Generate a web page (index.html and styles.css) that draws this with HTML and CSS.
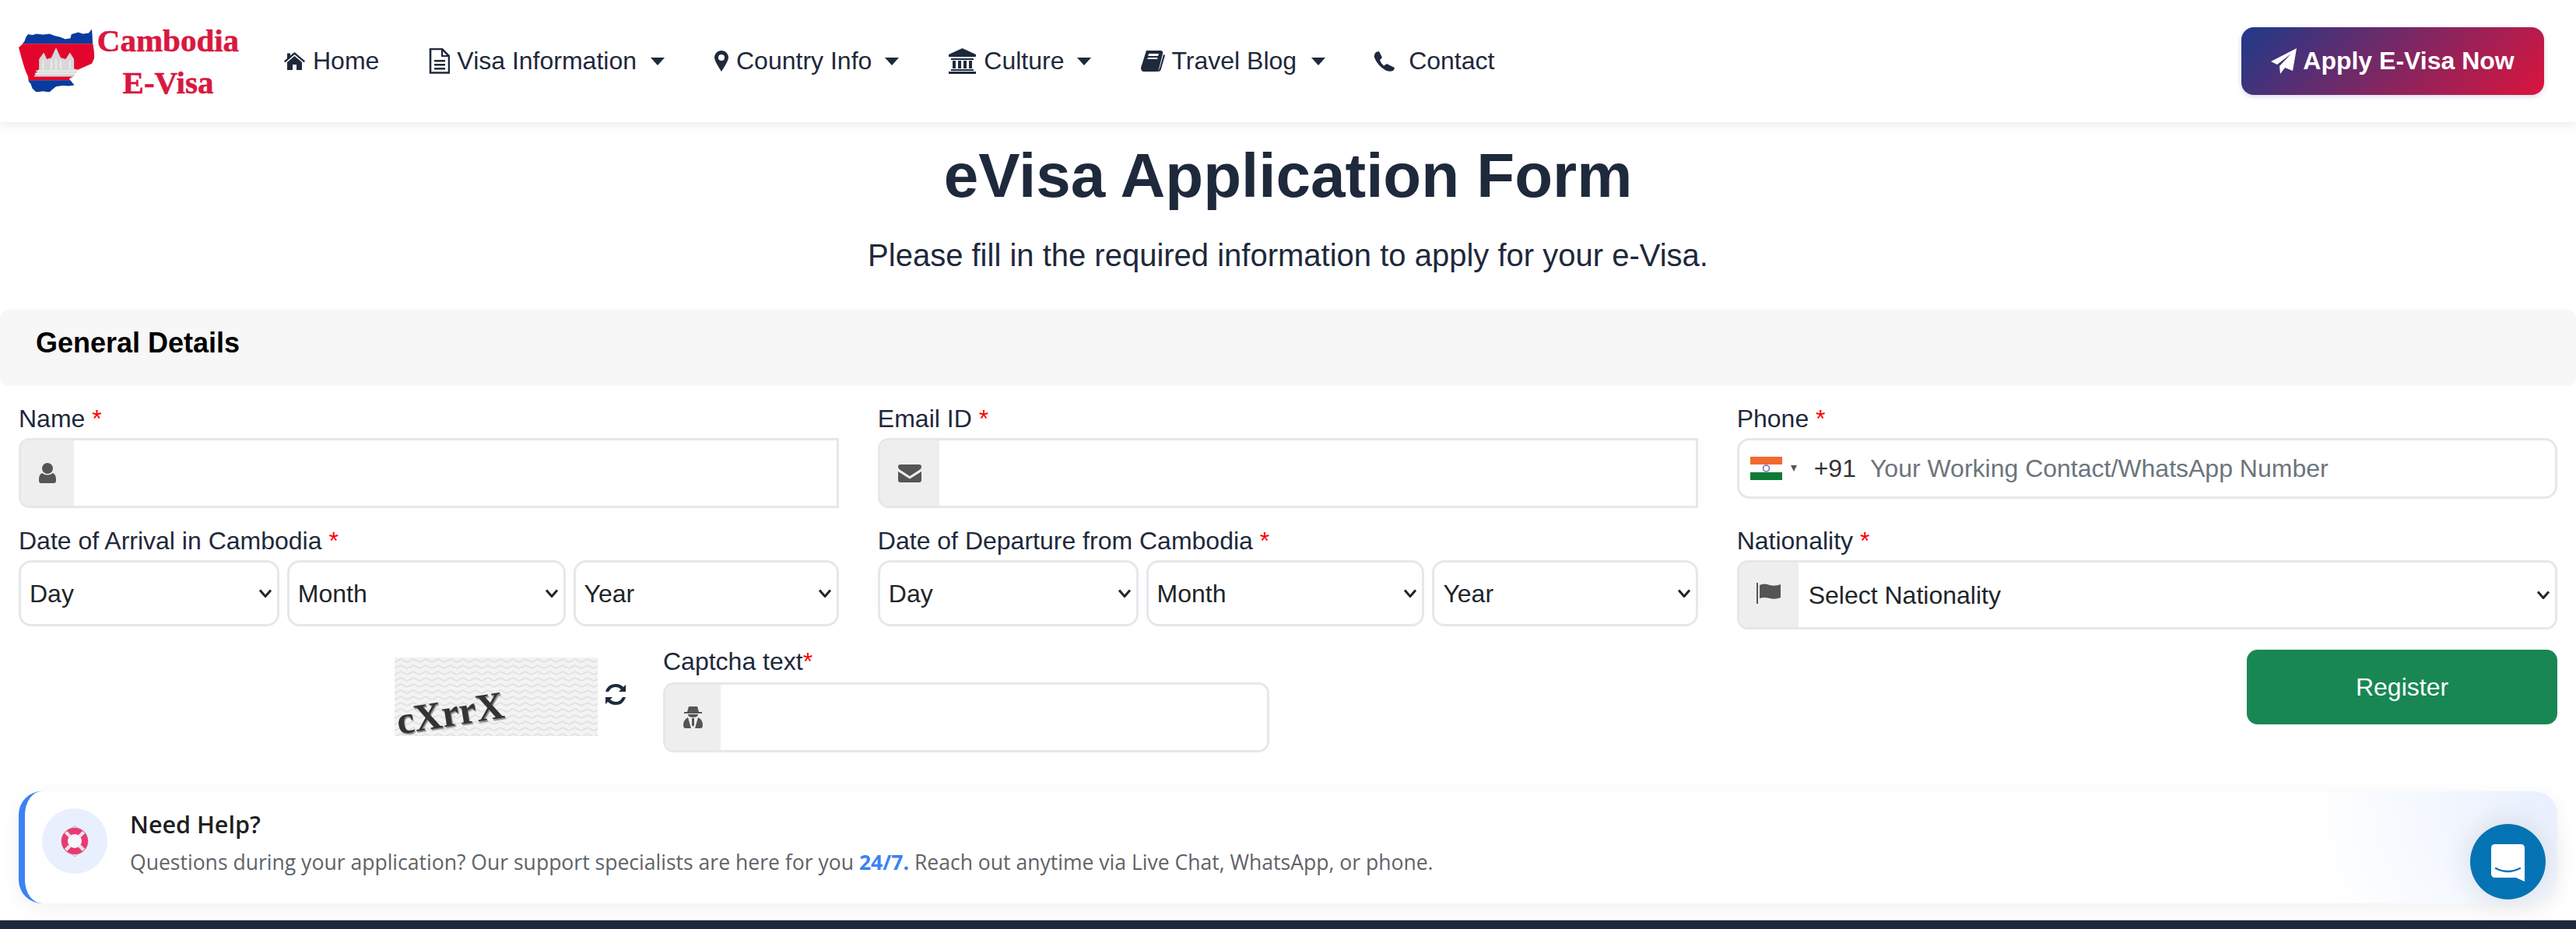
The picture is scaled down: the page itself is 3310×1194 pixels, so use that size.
FILE: index.html
```html
<!DOCTYPE html>
<html lang="en">

<head>
    <meta charset="UTF-8">
    <meta name="viewport" content="width=device-width, initial-scale=1.0">
    <title>eVisa Application Form</title>
    <link rel="stylesheet" href="styles.css">
</head>

<body>
    <header class="site-header">
        <a class="logo" href="#">
            <svg class="logo-map" viewBox="72 80 292 245">
                <defs>
                    <clipPath id="mapShape">
                        <path d="M72 150 84 140 95 125 100 110 108 100 125 103 140 98 165 101 190 98 210 106 230 110 250 118 270 115 274 100 285 97 300 92 318 98 340 95 352 80 354 105 355 130 360 160 362 190 352 212 330 222 300 235 288 250 280 262 265 270 275 282 285 295 265 298 240 296 215 300 200 312 190 322 165 318 140 322 125 308 118 290 110 280 108 262 98 240 90 215 80 180Z" />
                    </clipPath>
                </defs>
                <g clip-path="url(#mapShape)">
                    <rect x="72" y="80" width="292" height="56" fill="#0b3a9e" />
                    <rect x="72" y="136" width="292" height="140" fill="#e2062c" />
                    <rect x="72" y="276" width="292" height="50" fill="#0b3a9e" />
                </g>
                <path d="M130 262 150 232V195L168 170 180 195 197 190 215 150 233 190 252 195 268 170 284 195V232L300 235 282 262Z" fill="#d8d8d8" />
                <path d="M138 240H295M134 250H290M165 200V235M197 200V235M215 195V235M233 200V235M268 200V235" stroke="#f4f4f4" stroke-width="4" fill="none" />
            </svg>
            <span class="logo-text">Cambodia<br>E-Visa</span>
        </a>

        <nav class="main-nav">
            <a class="nav-link" href="#">
                <svg class="nav-icon icon-home" viewBox="0 0 27 23"><path d="M13.500 0 27 11.500 25.500 13.200 13.500 3 1.500 13.200 0 11.500 4 8V1.500H8V4.500ZM13.500 5 23 13V23H16V16H11V23H4V13Z" /></svg>
                Home
            </a>
            <a class="nav-link" href="#">
                <svg class="nav-icon icon-file" viewBox="0 0 27 33"><path d="M2 1H17L26 10V31.500H2Z" fill="none" stroke="currentColor" stroke-width="2.600" /><path d="M17 1V10H26" fill="none" stroke="currentColor" stroke-width="2.200" /><path d="M7 15H21V17.500H7ZM7 20H21V22.500H7ZM7 25H21V27.500H7Z" /></svg>
                Visa Information <span class="caret caret-file"></span>
            </a>
            <a class="nav-link" href="#">
                <svg class="nav-icon icon-pin" viewBox="0 0 18 27"><path fill-rule="evenodd" d="M9 0C14 0 18 4 18 9 18 13 12 22 9 27 6 22 0 13 0 9 0 4 4 0 9 0ZM9 5A4 4 0 1 0 9 13 4 4 0 1 0 9 5Z" /></svg>
                Country Info <span class="caret"></span>
            </a>
            <a class="nav-link" href="#">
                <svg class="nav-icon icon-bank" viewBox="0 0 35 33"><path d="M17.500 0 35 8V11H0V8ZM3 13H32V15H3ZM5 16H9V26H5ZM12 16H16V26H12ZM19 16H23V26H19ZM26 16H30V26H26ZM3 27H32V29H3ZM0 30H35V33H0Z" /></svg>
                Culture <span class="caret"></span>
            </a>
            <a class="nav-link" href="#">
                <svg class="nav-icon icon-book" viewBox="0 0 31 27"><path fill-rule="evenodd" d="M7 0H26Q29 1 28 4L23 24Q22 27 19 27H4Q0 27 0 22ZM10 4 9.300 7H22L23 4ZM9 9 8.300 11H21L21.500 9ZM31 6 25.500 25Q24.500 27 22 27L20 27Q23 26 24 23L29 5Z" /></svg>
                Travel Blog <span class="caret caret-book"></span>
            </a>
            <a class="nav-link" href="#">
                <svg class="nav-icon icon-phone" viewBox="0 0 28 26"><path d="M3 1 7 0 11 8 8 11Q9 15 13 18.500L17 16 27 21 26 24Q23 27 17 25 6 20 1 8 0 4 3 1Z" /></svg>
                Contact
            </a>
        </nav>

        <a class="apply-btn" href="#">
            <svg class="apply-icon" viewBox="0 0 33 33"><path d="M33 0 28 29 18 25 12 33 11 23 26 7 8 21 0 17Z" /></svg>
            Apply E-Visa Now
        </a>
    </header>

    <main>
        <h1 class="page-title">eVisa Application Form</h1>
        <p class="page-sub">Please fill in the required information to apply for your e-Visa.</p>

        <div class="section-bar">General Details</div>

        <form class="visa-form">
            <div class="form-grid">
                <div class="field">
                    <label>Name <span class="req">*</span></label>
                    <div class="input-group square-end">
                        <span class="addon addon-name">
                            <svg class="addon-icon icon-user" viewBox="0 0 22 26"><path d="M11 0A6.500 6.500 0 0 1 11 14 6.500 6.500 0 0 1 11 0ZM4 13Q11 18 18 13 22 15 22 21V23Q22 26 19 26H3Q0 26 0 23V21Q0 15 4 13Z" /></svg>
                        </span>
                        <input type="text">
                    </div>
                </div>

                <div class="field">
                    <label>Email ID <span class="req">*</span></label>
                    <div class="input-group square-end">
                        <span class="addon addon-wide">
                            <svg class="addon-icon icon-mail" viewBox="0 0 30 23"><path d="M3 0H27Q30 0 30 3 30 5 28 6.500L15 15 2 6.500Q0 5 0 3 0 0 3 0ZM0 9 15 18.500 30 9V20Q30 23 27 23H3Q0 23 0 20Z" /></svg>
                        </span>
                        <input type="text">
                    </div>
                </div>

                <div class="field">
                    <label>Phone <span class="req">*</span></label>
                    <div class="phone-box">
                        <svg class="flag-in" viewBox="0 0 41 30">
                            <rect width="41" height="10" fill="#f26a2e" />
                            <rect y="10" width="41" height="10" fill="#fff" />
                            <rect y="20" width="41" height="10" fill="#0f7a36" />
                            <circle cx="20.500" cy="15" r="4" fill="none" stroke="#5b6aa8" stroke-width="1.500" />
                        </svg>
                        <span class="flag-arrow"></span>
                        <span class="dial-code">+91</span>
                        <input type="text" placeholder="Your Working Contact/WhatsApp Number">
                    </div>
                </div>

                <div class="field">
                    <label>Date of Arrival in Cambodia <span class="req">*</span></label>
                    <div class="date-selects">
                        <select><option>Day</option></select>
                        <select><option>Month</option></select>
                        <select><option>Year</option></select>
                    </div>
                </div>

                <div class="field">
                    <label>Date of Departure from Cambodia <span class="req">*</span></label>
                    <div class="date-selects">
                        <select><option>Day</option></select>
                        <select><option>Month</option></select>
                        <select><option>Year</option></select>
                    </div>
                </div>

                <div class="field">
                    <label>Nationality <span class="req">*</span></label>
                    <div class="input-group tall">
                        <span class="addon addon-wide">
                            <svg class="addon-icon icon-flag" viewBox="0 0 31 27"><path d="M0 0H2V27H0ZM4 3Q10 0 17 3 24 5 31 2V19Q24 22 17 20 10 18 4 20Z" /></svg>
                        </span>
                        <select><option>Select Nationality</option></select>
                    </div>
                </div>
            </div>

            <div class="captcha-row">
                <div class="captcha-img"><span class="captcha-word">cXrrX</span></div>
                <svg class="refresh-icon" viewBox="0 0 28 27"><path d="M14 0Q20 0 24 4L27 1V10H18L21 7Q18 4 14 4 8 4 5 10H1Q4 0 14 0ZM1 17H10L7 20Q10 23 14 23 20 23 23 17H27Q24 27 14 27 8 27 4 23L1 26Z" /></svg>
                <div class="field captcha-field">
                    <label>Captcha text<span class="req">*</span></label>
                    <div class="input-group">
                        <span class="addon addon-spy">
                            <svg class="addon-icon icon-spy" viewBox="0 0 25 28"><path d="M7 0H18L20 7H24V9H1V7H5ZM6 10H19Q19 14 12.500 14 6 14 6 10ZM6 14 10 28H3Q0 28 0 24 0 17 6 14ZM19 14Q25 17 25 24 25 28 22 28H15ZM11 15H14L14 24 12.500 26 11 24Z" /></svg>
                        </span>
                        <input type="text">
                    </div>
                </div>
                <button class="register-btn" type="button">Register</button>
            </div>
        </form>

        <section class="help-card">
            <div class="help-circle">
                <svg class="help-buoy" viewBox="0 0 36 40">
                    <path d="M18 0 11 6M18 0 25 6M18 40 11 34M18 40 25 34" stroke="#b9afc0" stroke-width="1" />
                    <circle cx="18" cy="20" r="17" fill="none" stroke="#b3a9bb" stroke-width="1" />
                    <circle cx="18" cy="20" r="13" fill="#f6f8fe" stroke="#ea3a70" stroke-width="8" />
                    <path d="M6.500 8.500 12 14M29.500 8.500 24 14M6.500 31.500 12 26M29.500 31.500 24 26" stroke="#efe3e9" stroke-width="4.500" />
                </svg>
            </div>
            <div class="help-body">
                <h3>Need Help?</h3>
                <p>Questions during your application? Our support specialists are here for you <strong>24/7.</strong> Reach out anytime via Live Chat, WhatsApp, or phone.</p>
            </div>
        </section>
    </main>

    <footer class="site-footer"></footer>

    <button class="chat-bubble" type="button">
        <svg viewBox="0 0 43 48"><path d="M5 0H38Q43 0 43 5V48L32 43H5Q0 43 0 38V5Q0 0 5 0Z" fill="#fff" /><path d="M6 31Q21 39 37 31" fill="none" stroke="#0473b4" stroke-width="2.500" stroke-linecap="round" /></svg>
    </button>
</body>

</html>
```

FILE: styles.css
```css
* {
    box-sizing: border-box;
}

html,
body {
    height: 100%;
}

body {
    margin: 0;
    background: #fff;
    color: #1e293b;
    font-family: "Liberation Sans", Arial, sans-serif;
    font-size: 32px;
    overflow: hidden;
}

a {
    color: inherit;
    text-decoration: none;
}

/* header */
.site-header {
    display: flex;
    align-items: center;
    height: 157px;
    padding: 0 41px 0 24px;
    background: #fff;
    box-shadow: 0 4px 12px rgba(0, 0, 0, 0.08);
    position: relative;
}

.logo {
    display: flex;
    align-items: center;
    width: 341px;
}

.logo-map {
    width: 98px;
    height: 85px;
    margin-top: -1px;
}

.logo-text {
    width: 186px;
    margin-left: 1px;
    color: #d9183f;
    font-family: "Liberation Serif", serif;
    font-size: 41px;
    font-weight: bold;
    line-height: 54px;
    text-align: center;
    -webkit-text-stroke: 0.6px #d9183f;
}

.main-nav {
    display: flex;
    align-items: center;
    gap: 64px;
}

.nav-link {
    display: flex;
    align-items: center;
    gap: 10px;
    white-space: nowrap;
}

.nav-icon {
    fill: currentColor;
    color: #1e293b;
}

.icon-home { width: 27px; height: 23px; }
.icon-file { width: 27px; height: 33px; margin-right: -1px; }
.icon-pin { width: 18px; height: 27px; }
.icon-bank { width: 35px; height: 33px; }
.icon-book { width: 31px; height: 27px; margin-right: -2px; }
.icon-phone { width: 28px; height: 26px; margin: 0 7px 0 -2px; }

.caret {
    width: 0;
    height: 0;
    margin-left: 7px;
    border-top: 10px solid #1e293b;
    border-left: 9.500px solid transparent;
    border-right: 9.500px solid transparent;
}

.caret-file {
    margin-left: 8px;
}

.caret-book {
    margin-left: 9px;
}

.apply-btn {
    display: flex;
    align-items: center;
    justify-content: center;
    gap: 8px;
    width: 389px;
    height: 87px;
    margin-left: auto;
    border-radius: 16px;
    background: linear-gradient(135deg, #1e3a8a, #dc143c);
    color: #fff;
    font-weight: bold;
    box-shadow: 0 2px 6px rgba(30, 58, 138, 0.2);
}

.apply-icon {
    width: 33px;
    height: 33px;
    fill: #fff;
}

/* heading */
.page-title {
    margin: 21px 0 0;
    font-size: 80px;
    line-height: 96px;
    text-align: center;
}

.page-sub {
    margin: 30px 0 0;
    font-size: 40px;
    line-height: 48px;
    text-align: center;
}

.section-bar {
    height: 98px;
    margin-top: 46px;
    padding: 21px 46px 0;
    border-radius: 12px;
    background: #f7f7f7;
    color: #000;
    font-size: 36px;
    font-weight: bold;
    line-height: 43px;
}

/* form */
.visa-form {
    padding: 23px 24px 0;
}

.form-grid {
    display: grid;
    grid-template-columns: repeat(3, 1fr);
    gap: 23px 49.500px;
    align-items: start;
}

.field label {
    display: block;
    margin-bottom: 6px;
    line-height: 38px;
}

.req {
    color: #f00;
}

.input-group {
    display: flex;
    height: 90px;
    border: 3px solid #e5e7eb;
    border-radius: 14px;
    overflow: hidden;
}

.input-group.square-end {
    border-radius: 14px 0 0 14px;
}

.input-group.tall {
    height: 89px;
}

.input-group input,
.input-group select {
    flex: 1;
    min-width: 0;
    border: 0;
    outline: 0;
    background-color: #fff;
    color: #212529;
    font: inherit;
    padding: 0 8px 0 13px;
}

select {
    appearance: none;
    background-image: url("data:image/svg+xml,%3Csvg xmlns='http://www.w3.org/2000/svg' viewBox='0 0 16 11'%3E%3Cpath d='M1 1.500 8 9.500 15 1.500' fill='none' stroke='%23212529' stroke-width='3'/%3E%3C/svg%3E");
    background-repeat: no-repeat;
    background-position: right 7px center;
    background-size: 16px 11px;
}

.addon {
    display: flex;
    align-items: center;
    justify-content: center;
    flex-shrink: 0;
    width: 68px;
    background: #eee;
}

.addon-wide {
    width: 76px;
}

.addon-spy {
    width: 71px;
}

.addon-icon {
    fill: #555;
}

.icon-user { width: 22px; height: 26px; }
.icon-mail { width: 30px; height: 23px; }
.icon-flag { width: 31px; height: 27px; margin-top: -4px; }
.icon-spy { width: 25px; height: 28px; }

.date-selects {
    display: grid;
    grid-template-columns: 335fr 358fr 342fr;
    gap: 10px;
}

.date-selects select {
    width: 100%;
    height: 85px;
    padding: 0 24px 0 11px;
    border: 3px solid #e5e7eb;
    border-radius: 16px;
    background-color: #fff;
    color: #212529;
    font: inherit;
}

.phone-box {
    display: flex;
    align-items: center;
    height: 78px;
    padding-left: 14px;
    border: 3px solid #e5e7eb;
    border-radius: 16px;
}

.flag-in {
    width: 41px;
    height: 30px;
}

.flag-arrow {
    width: 0;
    height: 0;
    margin-left: 11px;
    border-top: 8px solid #555;
    border-left: 4px solid transparent;
    border-right: 4px solid transparent;
}

.dial-code {
    margin-left: 22px;
    color: #333;
}

.phone-box input {
    flex: 1;
    min-width: 0;
    margin-left: 18px;
    padding: 0;
    border: 0;
    outline: 0;
    font: inherit;
}

.phone-box input::placeholder {
    color: #6c757d;
    opacity: 1;
}

.captcha-row {
    display: flex;
    align-items: flex-start;
    margin-top: 22px;
}

.captcha-img {
    display: flex;
    align-items: flex-end;
    width: 261px;
    height: 101px;
    margin: 14px 0 0 483px;
    padding: 0 0 7px 2px;
    background-color: #f3f3f3;
    background-image: url("data:image/svg+xml,%3Csvg xmlns='http://www.w3.org/2000/svg' width='16' height='8'%3E%3Cpath d='M0 6 8 2 16 6' fill='none' stroke='%23e2e2e2' stroke-width='2'/%3E%3C/svg%3E");
}

.captcha-word {
    color: #333;
    font-family: "Liberation Serif", serif;
    font-size: 50px;
    font-weight: bold;
    line-height: 46px;
    text-shadow: 1px 2px 1px #888;
    transform: rotate(-9deg);
}

.refresh-icon {
    width: 28px;
    height: 27px;
    margin: 48px 0 0 9px;
    fill: #1e293b;
}

.captcha-field {
    width: 779px;
    margin-left: 47px;
}

.captcha-field label {
    margin-bottom: 8px;
}

.register-btn {
    width: 399px;
    height: 96px;
    margin: 4px 0 0 auto;
    border: 0;
    border-radius: 14px;
    background: #198754;
    color: #fff;
    font: inherit;
}

/* help card */
.help-card {
    display: flex;
    align-items: flex-start;
    gap: 29px;
    height: 144px;
    margin: 50px 24px 0;
    padding: 22px 0 0 22px;
    border-left: 8px solid #3b82f6;
    border-radius: 30px;
    background: radial-gradient(circle at 100% 0, #e8f0fe, #fff 320px);
    box-shadow: 0 6px 28px rgba(0, 0, 0, 0.06);
}

.help-circle {
    display: flex;
    align-items: center;
    justify-content: center;
    width: 84px;
    height: 84px;
    border-radius: 50%;
    background: #e8f0fe;
}

.help-buoy {
    width: 36px;
    height: 40px;
}

.help-body {
    font-family: "Open Sans", "Noto Sans", sans-serif;
}

.help-body h3 {
    margin: 0;
    color: #1f1f1f;
    font-size: 30.500px;
    font-weight: 600;
    line-height: 40px;
}

.help-body p {
    margin: 9px 0 0;
    color: #5f6368;
    font-size: 26.560px;
    line-height: 40px;
    white-space: nowrap;
}

.help-body strong {
    color: #3b82f6;
}

.site-footer {
    height: 13px;
    margin-top: 21px;
    border-top: 1px solid #ccd;
    background: #1e293b;
}

/* chat widget */
.chat-bubble {
    position: fixed;
    left: 3174px;
    top: 1059px;
    display: flex;
    align-items: center;
    justify-content: center;
    width: 97px;
    height: 97px;
    padding: 0;
    border: 0;
    border-radius: 50%;
    background: #0473b4;
    box-shadow: 0 0 40px rgba(0, 0, 0, 0.12);
}

.chat-bubble svg {
    width: 43px;
    height: 48px;
    margin-top: 2px;
}
```
